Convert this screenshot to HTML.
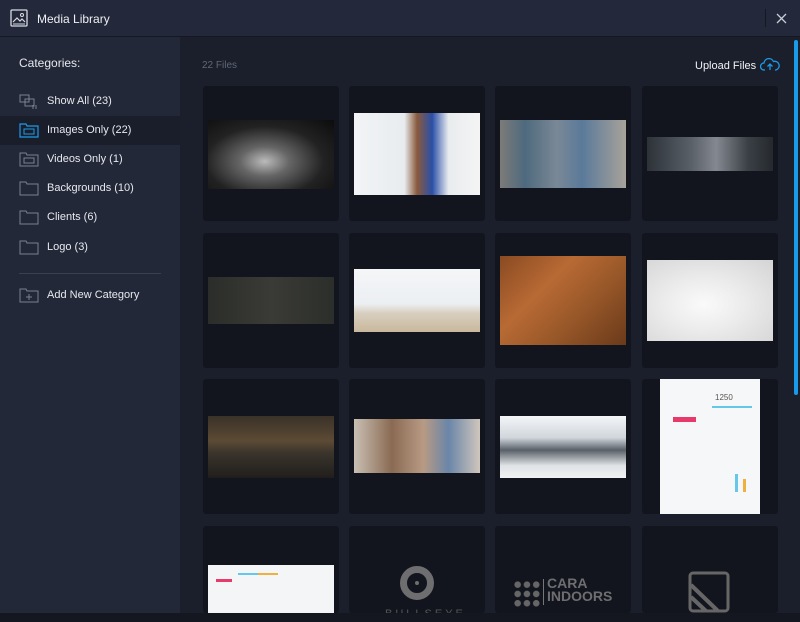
<!DOCTYPE html>
<html><head><meta charset="utf-8"><style>
*{margin:0;padding:0;box-sizing:border-box}
body{width:800px;height:622px;background:#1b1f2b;font-family:"Liberation Sans",sans-serif;position:relative;overflow:hidden;color:#e6e8ee}
.hdr{position:absolute;left:0;top:0;width:800px;height:37px;background:#23283a;border-bottom:1px solid #151823}
.hdr .t{position:absolute;left:37px;top:12px;font-size:12px;color:#eef0f4}
.side{position:absolute;left:0;top:37px;width:180px;height:585px;background:#232838}
.cat{position:absolute;left:19px;top:56px;font-size:12px;color:#e6e8ee}
.row{position:absolute;left:0;width:180px;height:29px;font-size:11px;color:#e6e8ee}
.row span{position:absolute;left:47px;top:8px}
.row svg{position:absolute;left:19px;top:6px}
.act{background:#1a1e2b}
.line{position:absolute;left:19px;top:273px;width:142px;height:1px;background:#3a4050}
.files{position:absolute;left:202px;top:60px;font-size:10px;color:#5f6677}
.up{position:absolute;left:695px;top:60px;font-size:11px;color:#f0f2f5}
.tile{position:absolute;width:136px;height:135px;background:#12151e;border-radius:3px;overflow:hidden}
.img{position:absolute;left:5px;width:126px}
.sb{position:absolute;left:794px;top:40px;width:4px;height:355px;background:#1a9ae8;border-radius:2px}
.bot{position:absolute;left:0;top:613px;width:800px;height:9px;background:#141720}
</style></head><body>
<div class="hdr">
<svg style="position:absolute;left:10px;top:9px" width="18" height="18" viewBox="0 0 18 18"><rect x="1" y="1" width="16" height="16" rx="1" fill="none" stroke="#d8dbe2" stroke-width="1.3"/><path d="M3 13l4-4 3 3 2-2 3 3" fill="none" stroke="#d8dbe2" stroke-width="1.2"/><circle cx="12" cy="6" r="1.5" fill="none" stroke="#d8dbe2"/><line x1="3" y1="15" x2="15" y2="15" stroke="#d8dbe2"/></svg>
<div class="t">Media Library</div>
<div style="position:absolute;left:765px;top:9px;width:1px;height:18px;background:#151823"></div>
<svg style="position:absolute;left:776px;top:13px" width="11" height="11"><path d="M1 1L10 10M10 1L1 10" stroke="#c8ccd4" stroke-width="1.3"/></svg>
</div>
<div class="side"></div>
<div class="cat">Categories:</div>
<div class="row" style="top:87px"><svg width="20" height="18"><rect x="1" y="2" width="9" height="7" fill="none" stroke="#7a8190"/><rect x="6" y="6" width="9" height="7" fill="none" stroke="#7a8190"/><path d="M14 12v4M17 12v4" stroke="#7a8190"/></svg><span>Show All (23)</span></div>
<div class="row act" style="top:116px"><svg width="20" height="16"><path d="M1 2h6l1 2h11v11H1z" fill="none" stroke="#1a9ae8" stroke-width="1.2"/><rect x="5" y="7" width="10" height="5" fill="none" stroke="#1a9ae8"/></svg><span>Images Only (22)</span></div>
<div class="row" style="top:145px"><svg width="20" height="16"><path d="M1 2h6l1 2h11v11H1z" fill="none" stroke="#7a8190"/><rect x="5" y="7" width="10" height="5" fill="none" stroke="#7a8190"/></svg><span>Videos Only (1)</span></div>
<div class="row" style="top:174px"><svg width="20" height="16"><path d="M1 2h6l1 2h11v11H1z" fill="none" stroke="#7a8190"/></svg><span>Backgrounds (10)</span></div>
<div class="row" style="top:203px"><svg width="20" height="16"><path d="M1 2h6l1 2h11v11H1z" fill="none" stroke="#7a8190"/></svg><span>Clients (6)</span></div>
<div class="row" style="top:233px"><svg width="20" height="16"><path d="M1 2h6l1 2h11v11H1z" fill="none" stroke="#7a8190"/></svg><span>Logo (3)</span></div>
<div class="line"></div>
<div class="row" style="top:281px"><svg width="20" height="16"><path d="M1 2h6l1 2h11v11H1z" fill="none" stroke="#7a8190"/><path d="M10 7v6M7 10h6" stroke="#7a8190"/></svg><span>Add New Category</span></div>

<div class="files">22 Files</div>
<div class="up">Upload Files</div>
<svg style="position:absolute;left:760px;top:57px" width="20" height="14" viewBox="0 0 20 14"><path d="M5 13H4a3.5 3.5 0 0 1 0-7 5 5 0 0 1 9.5-1.5A4 4 0 0 1 16 13h-1" fill="none" stroke="#1a9ae8" stroke-width="1.3"/><path d="M10 13V7M7.5 9.5L10 7l2.5 2.5" fill="none" stroke="#1a9ae8" stroke-width="1.3"/></svg>

<div class="tile" style="left:203px;top:86px"><div class="img" style="top:34px;height:69px;background:radial-gradient(ellipse at 45% 60%,#bbb 0,#666 25%,#222 60%,#0c0c0c 100%)"></div></div>
<div class="tile" style="left:349px;top:86px"><div class="img" style="top:27px;height:82px;background:linear-gradient(90deg,#f2f4f6 0,#e8ecef 40%,#8a5a3c 50%,#2a4fa8 62%,#e9ecee 75%,#f4f4f4 100%)"></div></div>
<div class="tile" style="left:495px;top:86px"><div class="img" style="top:34px;height:68px;background:linear-gradient(90deg,#7c7b78 0,#4e6a7e 20%,#7a8896 45%,#5a7a9a 65%,#a8a29a 100%)"></div></div>
<div class="tile" style="left:642px;top:86px"><div class="img" style="top:51px;height:34px;background:linear-gradient(90deg,#2c3238 0,#5a6068 35%,#848890 55%,#3b4046 80%,#25292e 100%)"></div></div>
<div class="tile" style="left:203px;top:233px"><div class="img" style="top:44px;height:47px;background:linear-gradient(90deg,#2b2d2a,#3a3b36 50%,#2c2e2b)"></div></div>
<div class="tile" style="left:349px;top:233px"><div class="img" style="top:36px;height:63px;background:linear-gradient(180deg,#f4f6f8 0,#eceff2 55%,#d8cfc0 70%,#c9b89c 100%)"></div></div>
<div class="tile" style="left:495px;top:233px"><div class="img" style="top:23px;height:89px;background:linear-gradient(135deg,#8a4a22 0,#b86a34 35%,#9c5a2a 60%,#6a3a1a 100%)"></div></div>
<div class="tile" style="left:642px;top:233px"><div class="img" style="top:27px;height:81px;background:radial-gradient(ellipse at 45% 55%,#fafafa 0,#ececec 40%,#d4d4d4 100%)"></div></div>
<div class="tile" style="left:203px;top:379px"><div class="img" style="top:37px;height:62px;background:linear-gradient(180deg,#3a3228 0,#5c4a34 40%,#3a342c 60%,#201e1c 100%)"></div></div>
<div class="tile" style="left:349px;top:379px"><div class="img" style="top:40px;height:54px;background:linear-gradient(90deg,#c9c0b4 0,#8a6a52 30%,#b89a84 55%,#6a86a8 75%,#d0c6bc 100%)"></div></div>
<div class="tile" style="left:495px;top:379px"><div class="img" style="top:37px;height:62px;background:linear-gradient(180deg,#f4f6f8 0,#d0d6dc 35%,#5a6068 55%,#dfe3e6 80%,#f2f2f2 100%)"></div></div>
<div class="tile" style="left:642px;top:379px"><div class="img" style="left:18px;width:100px;top:0;height:135px;background:#f6f7f8"><div style="position:absolute;left:13px;top:38px;width:23px;height:5px;background:#e83a6a"></div><div style="position:absolute;left:55px;top:14px;font-size:8px;color:#555">1250</div><div style="position:absolute;left:52px;top:27px;width:40px;height:2px;background:#66c8e8"></div><div style="position:absolute;left:75px;top:95px;width:3px;height:18px;background:#66c8e8"></div><div style="position:absolute;left:83px;top:100px;width:3px;height:13px;background:#f0b040"></div></div></div>
<div class="tile" style="left:203px;top:526px;height:87px"><div class="img" style="top:39px;height:48px;background:#f4f5f7"><div style="position:absolute;left:8px;top:14px;width:16px;height:3px;background:#e83a6a"></div><div style="position:absolute;left:30px;top:8px;width:20px;height:2px;background:#66c8e8"></div><div style="position:absolute;left:50px;top:8px;width:20px;height:2px;background:#f0b040"></div></div></div>
<div class="tile" style="left:349px;top:526px;height:87px"><div style="position:absolute;left:51px;top:40px;width:34px;height:34px;border:7px solid #6e6e70;border-radius:50%"></div><div style="position:absolute;left:66px;top:55px;width:4px;height:4px;background:#6e6e70;border-radius:50%"></div><div style="position:absolute;left:36px;top:82px;font-size:11px;color:#555;letter-spacing:3px">BULLSEYE</div></div>
<div class="tile" style="left:495px;top:526px;height:87px"><div style="position:absolute;left:18px;top:54px;width:28px;height:28px;background:radial-gradient(circle,#666 3px,transparent 3.5px) 0 0/9.3px 9.3px"></div><div style="position:absolute;left:48px;top:53px;width:1px;height:26px;background:#777"></div><div style="position:absolute;left:52px;top:51px;font-size:14px;line-height:13px;color:#6e6e70;font-weight:bold">CARA<br>INDOORS</div></div>
<div class="tile" style="left:642px;top:526px;height:87px"><svg style="position:absolute;left:46px;top:45px" width="42" height="42"><rect x="2" y="2" width="38" height="38" rx="3" fill="none" stroke="#666" stroke-width="3"/><path d="M3 14L30 40M3 26L18 40" stroke="#666" stroke-width="4"/></svg></div>
<div class="sb"></div>
<div class="bot"></div>
</body></html>
